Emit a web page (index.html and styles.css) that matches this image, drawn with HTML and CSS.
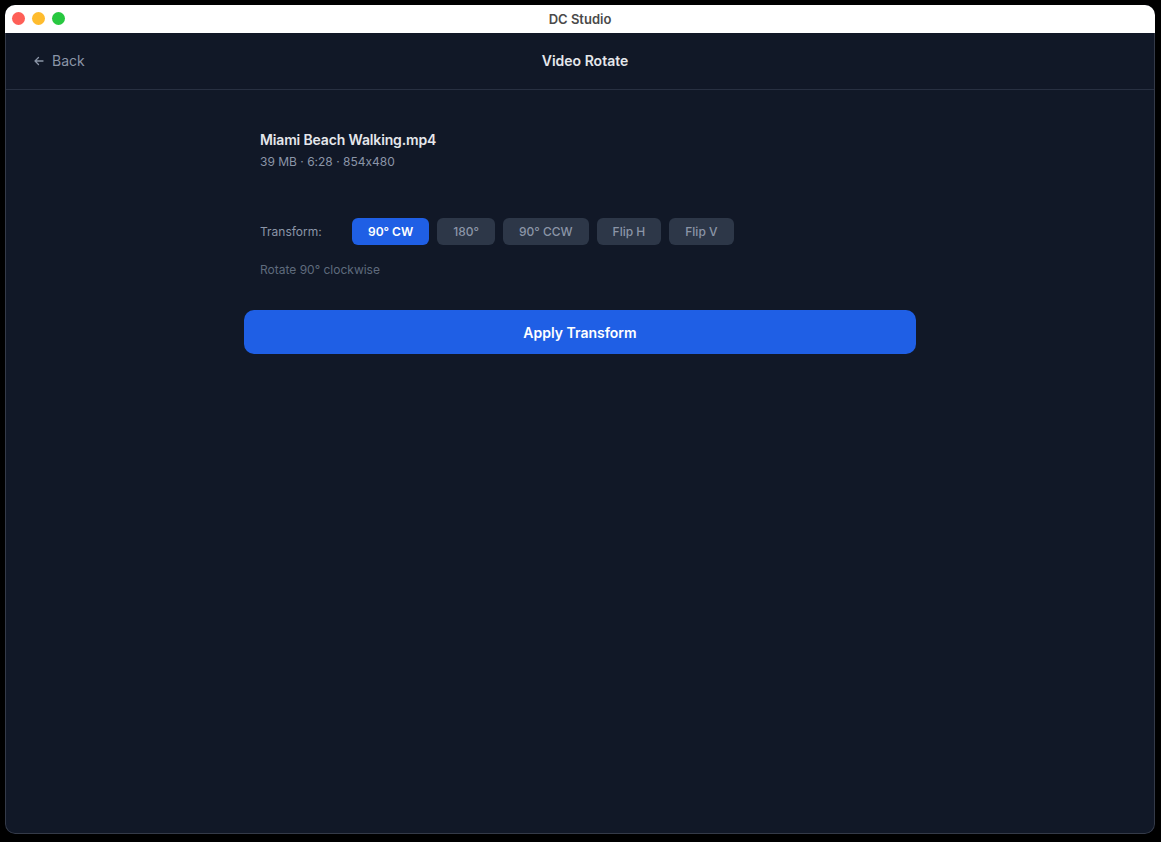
FILE: index.html
```html
<!DOCTYPE html>
<html lang="en">
<head>
    <meta charset="UTF-8">
    <meta name="viewport" content="width=device-width, initial-scale=1.0">
    <title>DC Studio</title>
    <link rel="stylesheet" href="styles.css">
</head>

<body>
    <div class="window">
        <div class="titlebar">
            <div class="lights">
                <span class="light red"></span>
                <span class="light yellow"></span>
                <span class="light green"></span>
            </div>
            <div class="app-title">DC Studio</div>
        </div>
        <div class="app">
            <div class="header">
                <a href="#" class="back">
                    <svg width="12" height="12" viewBox="0 0 12 12" fill="none" stroke="currentColor" stroke-width="1.3" stroke-linecap="round" stroke-linejoin="round">
                        <path d="M10 6H2M5.5 2.5L2 6l3.5 3.5"/>
                    </svg>
                    Back
                </a>
                <h1>Video Rotate</h1>
                <div class="spacer"></div>
            </div>
            <div class="content">
                <div class="file">
                    <div class="file-name">Miami Beach Walking.mp4</div>
                    <div class="file-meta">39 MB · 6:28 · 854x480</div>
                </div>
                <div class="transform">
                    <span class="label">Transform:</span>
                    <div class="options">
                        <button class="option active">90° CW</button>
                        <button class="option">180°</button>
                        <button class="option">90° CCW</button>
                        <button class="option">Flip H</button>
                        <button class="option">Flip V</button>
                    </div>
                </div>
                <div class="hint">Rotate 90° clockwise</div>
                <button class="apply">Apply Transform</button>
            </div>
        </div>
    </div>
</body>

</html>
```

FILE: styles.css
```css
body {
    font-family: Inter, "Noto Sans", sans-serif;
    font-feature-settings: "calt" 0;
    margin: 0;
    padding: 5px;
    background-color: #000;
}
.window {
    width: 1150px;
    height: 829px;
    display: flex;
    flex-direction: column;
    border-radius: 10px;
    overflow: hidden;
    background-color: #111827;
}
.titlebar {
    height: 28px;
    background-color: #fff;
    position: relative;
    display: flex;
    align-items: center;
    justify-content: center;
}
.lights {
    position: absolute;
    left: 7px;
    top: 7px;
    display: flex;
    gap: 7px;
}
.light {
    width: 13px;
    height: 13px;
    border-radius: 50%;
}
.red { background: #fe5f57; }
.yellow { background: #febc2e; }
.green { background: #28c840; }
.app-title {
    font-size: 13px;
    font-weight: 600;
    color: #4a4a4a;
}
.app {
    flex: 1;
    border: 1px solid #343a48;
    border-top: none;
    border-radius: 0 0 10px 10px;
}
.header {
    height: 56px;
    display: flex;
    align-items: center;
    justify-content: space-between;
    padding: 0 27px;
    border-bottom: 1px solid #283041;
}
.back {
    width: 80px;
    display: flex;
    align-items: center;
    gap: 7px;
    font-size: 14px;
    line-height: 16px;
    margin-top: -1px;
    color: #8b95a7;
    text-decoration: none;
}
.spacer {
    width: 70px;
}
.header h1 {
    margin: -1px 0 0;
    font-size: 14px;
    font-weight: 600;
    color: #e5e7eb;
}
.content {
    width: 672px;
    margin: 0 auto;
    padding-top: 40px;
}
.file,
.transform,
.hint {
    padding: 0 16px;
}
.file-name {
    font-size: 14px;
    line-height: 20px;
    font-weight: 600;
    letter-spacing: -0.15px;
    color: #e5e7eb;
}
.file-meta {
    margin-top: 4px;
    font-size: 12px;
    line-height: 16px;
    color: #8b95a7;
}
.transform {
    margin-top: 48px;
    display: flex;
    align-items: center;
}
.label {
    width: 92px;
    font-size: 12px;
    color: #8b95a7;
}
.options {
    display: flex;
    gap: 8px;
}
.option {
    height: 27px;
    font-family: inherit;
    font-feature-settings: "calt" 0;
    font-size: 12px;
    font-weight: 500;
    padding: 0 16px;
    border: none;
    border-radius: 6px;
    background-color: #2d3748;
    color: #8b95a7;
    cursor: pointer;
}
.option.active {
    background-color: #1f5fe5;
    color: #fff;
    font-weight: 600;
}
.hint {
    margin-top: 17px;
    font-size: 12px;
    line-height: 16px;
    color: #5f6b7d;
}
.apply {
    display: block;
    width: 100%;
    height: 44px;
    margin-top: 32px;
    font-family: inherit;
    font-size: 14px;
    font-weight: 600;
    color: #fff;
    background-color: #1f5fe5;
    border: none;
    border-radius: 10px;
    cursor: pointer;
}
```
